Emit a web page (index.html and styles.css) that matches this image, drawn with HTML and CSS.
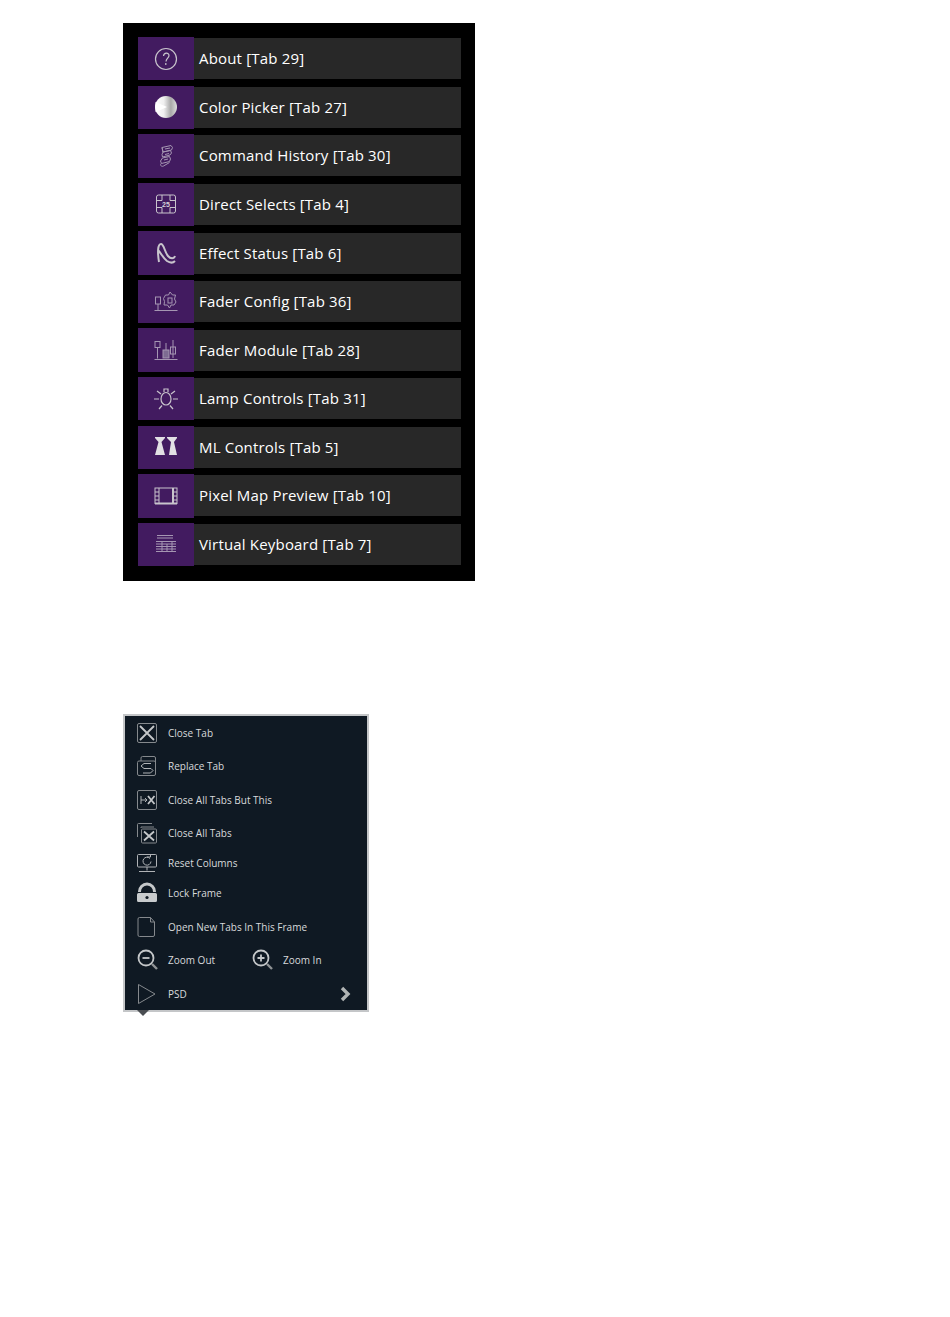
FILE: index.html
```html
<!DOCTYPE html>
<html lang="en">
<head>
<meta charset="utf-8">
<title>Tabs</title>
<link rel="stylesheet" href="styles.css">
</head>
<body>
<section class="tabs">
  <div class="tab"><span class="tile"><svg class="ic" viewBox="0 0 24 24"><circle cx="12" cy="12" r="10.500"/><path d="M9.500 9c.3-3.500 5.500-3.800 5.500-.5 0 2.500-2.800 2.800-3 6M11.800 16v2"/></svg></span><span class="label">About [Tab 29]</span></div>
  <div class="tab"><span class="tile"><svg class="ic" viewBox="0 0 24 24"><defs><linearGradient id="sph" x1="0" x2="1" y1="0.5" y2="0.5"><stop offset="0" stop-color="#fff"/><stop offset="0.4" stop-color="#f0f0f0"/><stop offset="0.72" stop-color="#a8a8a8"/><stop offset="1" stop-color="#dcdcdc"/></linearGradient></defs><circle class="sphere" cx="12" cy="12" r="11"/><path class="wedge" d="M1.500 7L13 12 1.500 17z"/></svg></span><span class="label">Color Picker [Tab 27]</span></div>
  <div class="tab"><span class="tile"><svg class="ic thin dim" viewBox="0 0 24 24"><path d="M8 3.500l9-2 1.500 2-1 2.500-8.500 2zM8 3.500l1 4.500M9 8l7.500-1.500 1 2.500-1.500 2-7.500 2-.5-2.500zM8.500 14l7-1.500 1 2.500-1 2.500-8 2-1-2.500zM7 19.500c-1.500 2 1 3.500 2.500 2.500l6-3.500M11 5l5-1M11 10.500l4-1M10 16l4-1"/></svg></span><span class="label">Command History [Tab 30]</span></div>
  <div class="tab"><span class="tile"><svg class="ic thin" viewBox="0 0 24 24"><rect x="2.500" y="3" width="19" height="18" rx="2"/><path d="M8 3v5.500M16 3v5.500M8 15.500V21M16 15.500V21M2.500 8.500H8M16 8.500h5.500M2.500 15.500H8M16 15.500h5.500"/><text class="mini" x="12" y="14.500">25</text></svg></span><span class="label">Direct Selects [Tab 4]</span></div>
  <div class="tab"><span class="tile"><svg class="ic bold" viewBox="0 0 24 24"><path d="M5 21C3.500 12 3.500 3 7 3c3 0 3.500 8 7 12 2.500 3 6 3 7 0M4 9c3 3 5 8 9 11 3 2 6 2 8 0"/></svg></span><span class="label">Effect Status [Tab 6]</span></div>
  <div class="tab"><span class="tile"><svg class="ic thin dim" viewBox="0 0 24 24"><rect x="1.500" y="7" width="5" height="7"/><path d="M4 14v6M0.500 20.500h23M16 2l2.500 3h3l-1 4 1.500 3-2 3h-3l-1.500 3-2-3h-3.500l.5-3.500-1-3 2-3.500h3z"/><rect x="14" y="8" width="4" height="5"/></svg></span><span class="label">Fader Config [Tab 36]</span></div>
  <div class="tab"><span class="tile"><svg class="ic thin dim" viewBox="0 0 24 24"><rect x="1" y="3.500" width="5" height="6"/><path d="M3.500 9.500v11M0.500 21.500h23M12 5v15M19 2v18"/><rect class="block" x="9" y="12" width="6" height="8"/><rect x="16.500" y="9" width="5" height="7"/></svg></span><span class="label">Fader Module [Tab 28]</span></div>
  <div class="tab"><span class="tile"><svg class="ic" viewBox="0 0 24 24"><path d="M10 5V2h4v3M7 12a5 6.500 0 0 1 10 0 5 6 0 0 1-10 0zM0 12h5M19 12h5M3 4l4 3M21 4l-4 3M5 22l3-3.500M19 22l-3-3.500"/></svg></span><span class="label">Lamp Controls [Tab 31]</span></div>
  <div class="tab"><span class="tile"><svg class="ic" viewBox="0 0 24 24"><path class="fill" d="M1 2h10v1L7.500 7 11 20H1L4.500 7 1 3zM13 2h10v1L20 7l3 13h-8l2-13-4-4z"/></svg></span><span class="label">ML Controls [Tab 5]</span></div>
  <div class="tab"><span class="tile"><svg class="ic thin" viewBox="0 0 24 24"><rect x="1" y="4" width="22" height="15.500"/><path class="wide" d="M19 4v15.500M1 19.500h22"/><path d="M5 4v15.500M1 8h4M1 12h4M1 16h4M19 8h4M19 12h4M19 16h4"/></svg></span><span class="label">Pixel Map Preview [Tab 10]</span></div>
  <div class="tab"><span class="tile"><svg class="ic thin dim" viewBox="0 0 24 24"><path d="M3 3.500h16M3 6h16M2 9.500h20M2 12h20M2 14.500h20M2 17h20M2 19.500h20M8 9.500v10M13 12v7.500M18 9.500v10"/></svg></span><span class="label">Virtual Keyboard [Tab 7]</span></div>
</section>

<section class="menu">
  <div class="item"><svg class="mi" viewBox="0 0 22 22"><rect x="1.500" y="1.500" width="19" height="19" rx="1.500"/><path class="wide" d="M4 4l14 14M18 4L4 18"/></svg><span class="name">Close Tab</span></div>
  <div class="item"><svg class="mi" viewBox="0 0 22 22"><path d="M5 6V3a1.500 1.500 0 0 1 1.500-1.500H18A1.500 1.500 0 0 1 19.500 3v14"/><rect x="1.500" y="6" width="18" height="14.500" rx="1.500"/><path class="mild" d="M15 8.500H8L5 11l3 2.500h7l2 2-2.500 2.500H7"/></svg><span class="name">Replace Tab</span></div>
  <div class="item"><svg class="mi" viewBox="0 0 22 22"><rect x="1.500" y="1.500" width="19" height="19" rx="1.500"/><path class="mild" d="M5 7v8M5 11h6M9 9l2 2-2 2"/><path class="wide" d="M12 7l6.500 8M18.500 7L12 15"/></svg><span class="name">Close All Tabs But This</span></div>
  <div class="item"><svg class="mi" viewBox="0 0 22 22"><path d="M1.500 15V2.500a1 1 0 0 1 1-1H16M5 6V5h13"/><rect x="5.500" y="7" width="15" height="14" rx="1"/><path class="wide" d="M8 9.500l10 9M18 9.500l-10 9"/></svg><span class="name">Close All Tabs</span></div>
  <div class="item short"><svg class="mi" viewBox="0 0 22 22"><rect class="mild" x="1.500" y="2.500" width="19" height="12.500" rx="1"/><path class="mild" d="M11 15v3.500M3 19.500h16"/><path class="mild" d="M14 6.500a4 4 0 1 0 1 3M11 5h3.500V3"/></svg><span class="name">Reset Columns</span></div>
  <div class="item mid"><svg class="mi" viewBox="0 0 22 22"><path class="wide thick" d="M3.500 10V9.500a7.500 7.500 0 0 1 15 0v.5"/><path class="fill" d="M2.500 11h17a1.500 1.500 0 0 1 1.500 1.500v6a1.500 1.500 0 0 1-1.500 1.500h-17A1.500 1.500 0 0 1 1 18.500v-6A1.500 1.500 0 0 1 2.500 11z"/><circle class="hole" cx="11" cy="15.500" r="1.600"/></svg><span class="name">Lock Frame</span></div>
  <div class="item"><svg class="mi" viewBox="0 0 22 22"><path d="M3.500 1.500H14.500l4 4.500v13a1.500 1.500 0 0 1-1.500 1.500H3.500A1.500 1.500 0 0 1 2 19V3a1.500 1.500 0 0 1 1.500-1.500zM14.500 1.500V6h4"/></svg><span class="name">Open New Tabs In This Frame</span></div>
  <div class="item">
    <div class="half"><svg class="mi" viewBox="0 0 22 22"><circle class="wide" cx="10" cy="9" r="7.500"/><path class="wide" d="M6.500 9h7"/><path class="handle" d="M16 15l5 5"/></svg><span class="name">Zoom Out</span></div>
    <div class="half"><svg class="mi" viewBox="0 0 22 22"><circle class="wide" cx="10" cy="9" r="7.500"/><path class="wide" d="M6.500 9h7M10 5.500v7"/><path class="handle" d="M16 15l5 5"/></svg><span class="name">Zoom In</span></div>
  </div>
  <div class="item psd"><svg class="mi" viewBox="0 0 22 22"><path d="M2.500 1.500L19 11 2.500 20.500z"/></svg><span class="name">PSD</span><svg class="chev" viewBox="0 0 12 16"><path d="M3 2l6 6-6 6"/></svg></div>
  <span class="pointer"></span>
</section>
</body>
</html>
```

FILE: styles.css
```css
html, body { margin: 0; padding: 0; background: #fff; }
body { height: 1317px; overflow: hidden; padding: 23px 0 0 123px; box-sizing: border-box; }

.tabs {
  width: 352px;
  height: 558px;
  box-sizing: border-box;
  padding: 14px 14px 14px 15px;
  background: #000;
  display: flex;
  flex-direction: column;
  gap: 5.2px;
}
.tab {
  height: 43.4px;
  display: flex;
  align-items: center;
}
.tile {
  flex: none;
  width: 56px;
  height: 100%;
  background: #421b60;
  display: flex;
  align-items: center;
  justify-content: center;
}
.label {
  flex: 1;
  align-self: center;
  height: 41px;
  padding-left: 5px;
  background: #282828;
  color: #fff;
  font: 15px/41px "Open Sans", sans-serif;
  letter-spacing: 0.18px;
  white-space: nowrap;
}
.ic { width: 24px; height: 24px; fill: none; stroke: #c8c4cc; stroke-width: 1.2; overflow: visible; }
.ic.thin { stroke-width: 1; }
.ic.bold { stroke-width: 2; }
.ic.dim { stroke: #a596b2; }
.ic .fill { fill: #e2e0e4; stroke: none; }
.ic .wide { stroke-width: 2; }
.ic .block { fill: #7d6b92; }
.sphere { fill: url(#sph); stroke: none; }
.ic .wedge { fill: #fff; stroke: none; }
.mini { fill: #d4d0d8; stroke: none; font: 700 7px "Liberation Sans", sans-serif; text-anchor: middle; }

.menu {
  position: relative;
  margin-top: 133px;
  width: 246px;
  height: 298px;
  box-sizing: border-box;
  border: 2px solid #c4c6c8;
  background: #0f1923;
  padding-left: 11px;
  color: #d8dadc;
  font: 10px "Open Sans", sans-serif;
}
.item { height: 33.5px; display: flex; align-items: center; }
.item.short { height: 26.5px; }
.item.mid { height: 33.5px; }
.half { width: 115px; display: flex; align-items: center; }
.mi { flex: none; width: 22px; height: 22px; margin-right: 10px; fill: none; stroke: #85898d; stroke-width: 1; }
.mi .wide { stroke-width: 1.8; stroke: #c4c7c9; }
.mi .mild { stroke: #b0b3b6; }
.mi .thick { stroke-width: 3; }
.mi .fill { fill: #c8cbcd; stroke: none; }
.mi .hole { fill: #0f1923; stroke: none; }
.mi .handle { stroke: #8e9294; stroke-width: 2.4; }
.name { white-space: nowrap; }
.psd { position: relative; }
.chev {
  position: absolute;
  left: 203px;
  top: 9px;
  width: 12px;
  height: 16px;
  fill: none;
  stroke: #b0b4b4;
  stroke-width: 3.4;
}
.pointer {
  position: absolute;
  left: 12px;
  bottom: -6px;
  width: 0;
  height: 0;
  border-left: 6px solid transparent;
  border-right: 6px solid transparent;
  border-top: 6px solid #4a4e52;
}
```
